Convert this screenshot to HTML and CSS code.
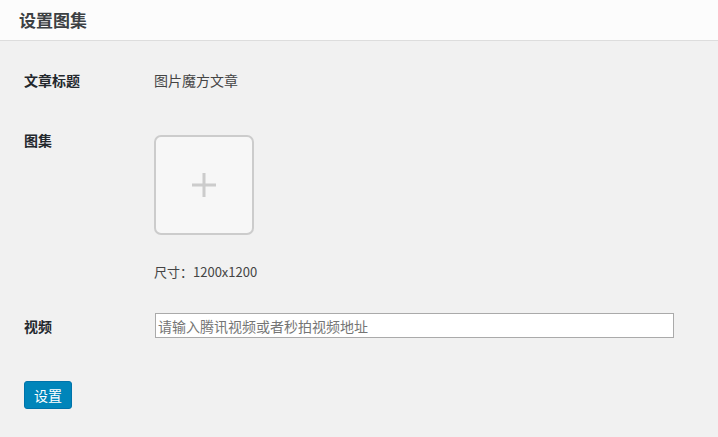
FILE: index.html
```html
<!DOCTYPE html>
<html lang="zh-CN">
<head>
<meta charset="utf-8">
<title>设置图集</title>
<link rel="stylesheet" href="styles.css">
</head>
<body>
<header class="top">
  <h1 class="title">设置图集</h1>
</header>
<main class="form">
  <div class="row row-title">
    <div class="label">文章标题</div>
    <div class="value">图片魔方文章</div>
  </div>
  <div class="row row-gallery">
    <div class="label">图集</div>
    <div class="field">
      <div class="upload">
        <svg width="24" height="24" viewBox="0 0 24 24" aria-hidden="true">
          <rect x="0" y="10.5" width="24" height="3" fill="#cccccc"/>
          <rect x="10.5" y="0" width="3" height="24" fill="#cccccc"/>
        </svg>
      </div>
      <div class="size">尺寸：1200x1200</div>
    </div>
  </div>
  <div class="row row-video">
    <div class="label">视频</div>
    <div class="field">
      <input class="text" type="text" placeholder="请输入腾讯视频或者秒拍视频地址">
    </div>
  </div>
  <div class="actions">
    <button class="btn" type="button">设置</button>
  </div>
</main>
</body>
</html>
```

FILE: styles.css
```css
html, body {
  margin: 0;
  padding: 0;
}
body {
  background: #f1f1f1;
  font-family: "Noto Sans CJK SC", "Noto Sans", "Liberation Sans", sans-serif;
  color: #444;
  font-size: 14px;
  width: 718px;
  height: 437px;
  overflow: hidden;
}
.top {
  height: 40px;
  background: #fcfcfc;
  border-bottom: 1px solid #dddddd;
  display: flex;
  align-items: center;
  padding-left: 19px;
}
.title {
  margin: 0;
  font-size: 17px;
  line-height: 22px;
  font-weight: 700;
  color: #3c4043;
}
.form {
  padding-left: 24px;
}
.row {
  display: grid;
  grid-template-columns: 130px 1fr;
}
.label {
  font-weight: 700;
  color: #23282d;
  line-height: 20px;
  font-size: 14px;
}
.value {
  line-height: 20px;
  color: #444;
}
.row-title {
  padding-top: 29px;
}
.row-gallery {
  margin-top: 40px;
}
.row-gallery .field {
  padding-top: 5px;
}
.upload {
  width: 96px;
  height: 96px;
  border: 2px solid #cccccc;
  border-radius: 7px;
  background: #f7f7f7;
  display: flex;
  align-items: center;
  justify-content: center;
}
.size {
  margin-top: 27px;
  line-height: 20px;
  font-size: 13px;
  color: #444;
}
.row-video {
  margin-top: 31px;
  align-items: center;
}
.row-video .field {
  padding-left: 1px;
}
.text {
  box-sizing: border-box;
  width: 519px;
  height: 25px;
  border: 1px solid #aaaaaa;
  background: #fff;
  padding: 0 2px;
  margin: 0;
  font-family: inherit;
  font-size: 14px;
  outline: none;
  border-radius: 0;
}
.text::placeholder {
  color: #757575;
}
.actions {
  margin-top: 43px;
}
.btn {
  box-sizing: border-box;
  width: 48px;
  height: 28px;
  background: #0085ba;
  border: 1px solid #0073aa;
  border-radius: 3px;
  color: #fff;
  font-family: inherit;
  font-size: 14px;
  line-height: 26px;
  padding: 0;
  margin: 0;
  cursor: pointer;
}
```
